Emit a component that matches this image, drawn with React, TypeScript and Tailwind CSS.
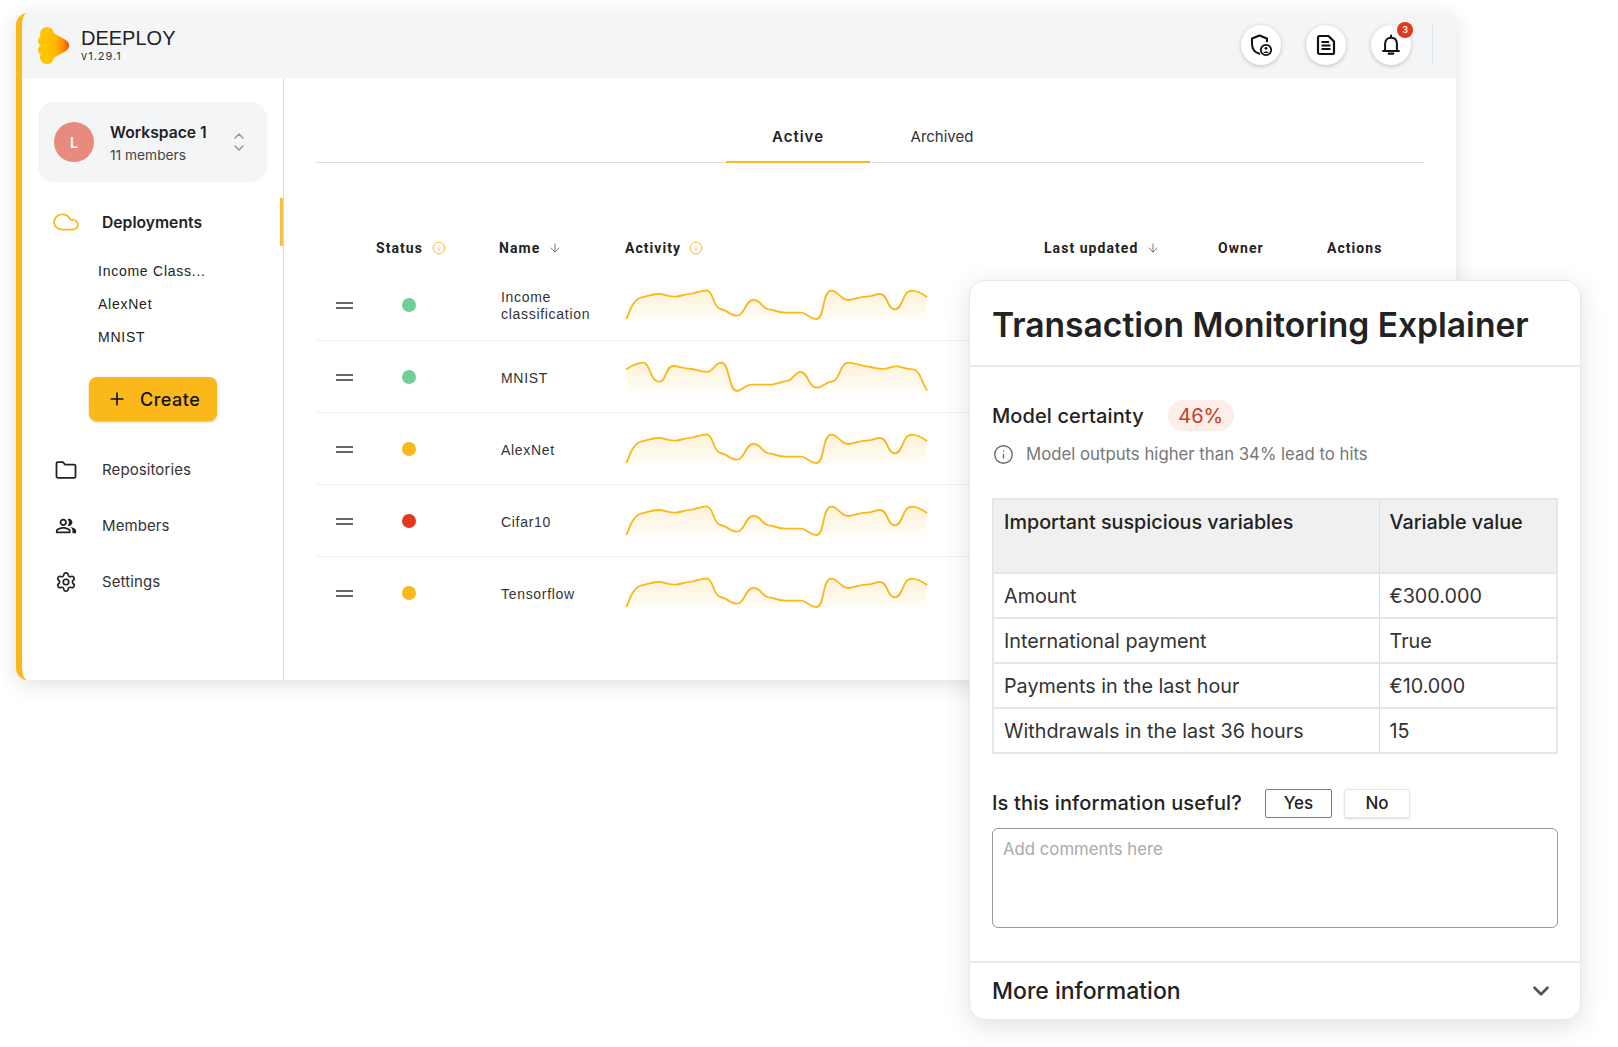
import { Cloud, Settings, Plus, ChevronUp, ChevronDown, ArrowDown, Info } from "lucide-react";
import { MdOutlinePeopleAlt } from "react-icons/md";

const PATH_A =
  "M20,115 C30,90 40,58 65,52 C80,50 95,42 115,42 C135,42 145,50 165,50 C180,50 190,43 215,41 C235,38 245,30 262,32 C280,35 280,80 300,87 C320,88 330,107 350,107 C375,107 375,60 400,60 C425,60 425,85 445,88 C465,90 475,97 495,98 L545,98 C560,100 570,117 590,117 C615,117 605,32 635,32 C655,32 660,60 685,60 C700,60 715,50 740,50 C755,50 765,42 780,42 C805,42 800,88 825,88 C850,88 845,33 875,32 C890,32 905,40 920,50";
const PATH_B =
  "M20,267 C35,258 50,248 70,248 C90,248 90,305 118,305 C140,305 135,258 160,258 C175,258 190,267 215,267 C235,270 245,277 265,275 C280,272 285,248 305,248 C330,250 325,333 350,333 C365,333 375,314 395,314 L455,314 C475,312 485,304 505,302 C520,298 525,276 542,276 C565,276 565,323 590,323 C610,323 615,305 640,303 C660,298 660,248 685,248 C705,248 720,258 745,260 C765,265 775,268 795,266 C810,263 820,258 835,259 C850,262 860,268 880,268 C900,272 905,305 920,330";

const rows = [
  { name: "Income classification", dot: "bg-[#6fcf97]", chart: "a" },
  { name: "MNIST", dot: "bg-[#6fcf97]", chart: "b" },
  { name: "AlexNet", dot: "bg-[#fbb81b]", chart: "a" },
  { name: "Cifar10", dot: "bg-[#e0391c]", chart: "a" },
  { name: "Tensorflow", dot: "bg-[#fbb81b]", chart: "a" },
];

const variables = [
  { label: "Amount", value: "€300.000" },
  { label: "International payment", value: "True" },
  { label: "Payments in the last hour", value: "€10.000" },
  { label: "Withdrawals in the last 36 hours", value: "15" },
];

const Sparkline = ({ chart, id }: { chart: string; id: string }) => {
  const d = chart === "a" ? PATH_A : PATH_B;
  const top = chart === "a" ? -33 : 183;
  const base = top + 165;
  return (
    <svg width="320" height="72" viewBox={`0 ${top} 960 216`} fill="none">
      <defs>
        <linearGradient id={id} x1="0" y1="0" x2="0" y2="1">
          <stop offset="0" stopColor="#fbb81b" stopOpacity="0.18" />
          <stop offset="1" stopColor="#fbb81b" stopOpacity="0" />
        </linearGradient>
      </defs>
      <path d={`${d} L920,${base} L20,${base} Z`} fill={`url(#${id})`} />
      <path d={d} stroke="#fbb81b" strokeWidth="5.5" strokeLinecap="round" />
    </svg>
  );
};

const Logo = () => (
  <svg width="33" height="37" viewBox="0 0 33 37" fill="none">
    <defs>
      <linearGradient id="logo-g" x1="0" y1="0" x2="1" y2="0">
        <stop offset="0" stopColor="#ffc400" />
        <stop offset="0.45" stopColor="#ffb400" />
        <stop offset="0.75" stopColor="#ff8a00" />
        <stop offset="1" stopColor="#ff4f00" />
      </linearGradient>
    </defs>
    <circle cx="10" cy="7" r="7" fill="#ffc400" />
    <circle cx="6" cy="14" r="5" fill="#ffc400" />
    <circle cx="6" cy="23" r="5" fill="#ffc400" />
    <circle cx="10" cy="30" r="7" fill="#ffc400" />
    <path d="M9 2 L28 12.5 C33.5 15.5 33.5 21.5 28 24.5 L9 35 Z" fill="url(#logo-g)" />
  </svg>
);

const ShieldUser = () => (
  <svg width="24" height="24" viewBox="0 0 24 24" fill="none" stroke="#111" strokeWidth="2">
    <path d="M11 21 C6 19.5 3 15.5 3 11 V5.5 L10.5 2.5 L18 5.5 V9" strokeLinejoin="round" />
    <circle cx="17" cy="17" r="5.2" strokeWidth="1.8" />
    <circle cx="17" cy="15.3" r="1.4" fill="#111" stroke="none" />
    <path d="M14.4 20 C14.8 18 19.2 18 19.6 20 Z" fill="#111" stroke="none" />
  </svg>
);

const DocIcon = () => (
  <svg width="22" height="22" viewBox="0 0 22 22" fill="none" stroke="#111" strokeWidth="2.2">
    <path d="M3 3.5 C3 2.7 3.7 2 4.5 2 H13.5 L19 7.5 V18.5 C19 19.3 18.3 20 17.5 20 H4.5 C3.7 20 3 19.3 3 18.5 Z" strokeLinejoin="round" />
    <path d="M6.5 8 H14 M6.5 11.5 H15.5 M6.5 15 H15.5" />
  </svg>
);

const BellIcon = () => (
  <svg width="20" height="22" viewBox="0 0 22 24" fill="none" stroke="#111" strokeWidth="2.2">
    <path d="M4.5 17.5 V11 C4.5 6.5 7 4 11 4 C15 4 17.5 6.5 17.5 11 V17.5" />
    <path d="M1.5 18.5 H20.5" />
    <path d="M11 1.5 V3" strokeLinecap="round" />
    <path d="M8.5 21.5 H13.5" strokeWidth="2.4" strokeLinecap="round" />
  </svg>
);

const FolderIcon = () => (
  <svg width="22" height="18" viewBox="0 0 22 18" fill="none" stroke="#222" strokeWidth="1.8">
    <path d="M1.5 2.5 C1.5 1.8 2 1.2 2.8 1.2 H8 L10 3.6 H19.2 C20 3.6 20.5 4.1 20.5 4.8 V15.6 C20.5 16.3 20 16.8 19.2 16.8 H2.8 C2 16.8 1.5 16.3 1.5 15.6 Z" strokeLinejoin="miter" />
  </svg>
);

const HeaderButton = ({ children }: { children: React.ReactNode }) => (
  <div className="relative w-10 h-10 rounded-full bg-white shadow-[0_1px_4px_rgba(0,0,0,0.22)] flex items-center justify-center">
    {children}
  </div>
);

const SideLink = ({ icon, label }: { icon: React.ReactNode; label: string }) => (
  <div className="flex items-center h-14 pl-[33px]">
    <div className="w-[22px] flex justify-center">{icon}</div>
    <span className="ml-[25px] text-[15px] tracking-[0.1px] text-[#333]">{label}</span>
  </div>
);

const HeaderInfo = () => <Info size={14} className="text-[#fbb81b]" strokeWidth={1.6} />;

export default function App() {
  return (
    <div className="relative w-[1618px] h-[1047px] bg-white overflow-hidden pt-[13px] pl-[16px] font-['Inter',sans-serif]">
      {/* main window */}
      <div className="w-[1440px] h-[667px] rounded-xl overflow-hidden bg-white border-l-[6px] border-[#fbb81b] shadow-[0_4px_20px_rgba(50,60,80,0.16)] flex flex-col">
        <header className="h-[65px] shrink-0 bg-[#f3f5f7] flex items-center">
          <div className="ml-[15px] -mt-[1px]">
            <Logo />
          </div>
          <div className="ml-[11px] -mt-[3px]">
            <div className="text-[20px] leading-[24px] text-[#222] font-['Liberation_Sans',sans-serif]">DEEPLOY</div>
            <div className="text-[11px] leading-[12px] tracking-[1px] text-[#333]">v1.29.1</div>
          </div>
          <div className="ml-auto flex items-center gap-[25px] mr-[4px] -mt-[2px]">
            <HeaderButton>
              <ShieldUser />
            </HeaderButton>
            <HeaderButton>
              <DocIcon />
            </HeaderButton>
            <HeaderButton>
              <BellIcon />
              <span className="absolute -top-[3px] right-[-2px] w-4 h-4 rounded-full bg-[#e0391c] text-white text-[9px] font-semibold flex items-center justify-center">
                3
              </span>
            </HeaderButton>
            <div className="w-px h-10 bg-[#dfe2e6] -ml-[4px] mr-[19px]" />
          </div>
        </header>

        <div className="flex flex-1 min-h-0">
          {/* sidebar */}
          <aside className="w-[262px] shrink-0 border-r border-[#dcdcdc] relative">
            <div className="mt-[24px] ml-[16px] w-[229px] h-[80px] rounded-2xl bg-[#f3f5f7] flex items-center pl-4">
              <div className="w-10 h-10 rounded-full bg-[#e98a7e] text-white text-[14px] font-semibold flex items-center justify-center">
                L
              </div>
              <div className="ml-4 w-[122px] mt-[2px]">
                <div className="text-[15.7px] leading-5 font-semibold text-[#222] pt-[1px]">Workspace 1</div>
                <div className="text-[13.75px] leading-5 mt-[2px] text-[#444]">11 members</div>
              </div>
              <div className="flex flex-col items-center -space-y-[4px] text-[#999] -ml-[1px]">
                <ChevronUp size={16} strokeWidth={2.4} />
                <ChevronDown size={16} strokeWidth={2.4} />
              </div>
            </div>

            <div className="relative flex items-center h-12 mt-4 pl-[34px]">
              <Cloud size={26} strokeWidth={1.5} className="text-[#fbb81b] w-[26px] -ml-[3px] scale-x-110" />
              <span className="ml-[23px] text-[15.7px] font-semibold text-[#222] mt-[2px]">Deployments</span>
              <div className="absolute right-0 top-0 w-[3px] h-12 bg-[#f3c03f]" />
            </div>

            <div className="pl-[76px] mt-[9px] text-[14px] tracking-[0.75px] text-[#222] font-['Liberation_Sans',sans-serif]">
              <div className="h-[33px] flex items-center">Income Class...</div>
              <div className="h-[33px] flex items-center">AlexNet</div>
              <div className="h-[33px] flex items-center">MNIST</div>
            </div>

            <button className="ml-[67px] mt-[23px] w-[128px] h-11 rounded-lg bg-[#fbb81b] shadow-[0_1px_2px_rgba(180,120,0,0.5)] flex items-center pl-[18px] text-[18px] font-medium tracking-[0.5px] text-[#111]">
              <Plus size={20} strokeWidth={2} />
              <span className="ml-[13px]">Create</span>
            </button>

            <div className="mt-[21px]">
              <SideLink icon={<FolderIcon />} label="Repositories" />
              <SideLink icon={<MdOutlinePeopleAlt size={22} className="text-[#222]" />} label="Members" />
              <SideLink icon={<Settings size={22} strokeWidth={1.8} className="text-[#222]" />} label="Settings" />
            </div>
          </aside>

          {/* deployments list */}
          <main className="flex-1 pl-[32px] pr-[32px]">
            <div className="mt-[31px] h-[54px] border-b border-[#dcdcdc] flex pl-[410px]">
              <div className="w-[144px] h-[54px] border-b-2 border-[#fbb81b] pt-[4px] flex items-center justify-center text-[15px] font-semibold tracking-[1px] text-[#222]">
                Active
              </div>
              <div className="w-[144px] h-[53px] pt-[3px] flex items-center justify-center text-[15px] text-[#333]">Archived</div>
            </div>

            <div className="mt-[67px] mb-[3px] h-[36px] grid grid-cols-[60px_123px_126px_419px_174px_109px_1fr] items-center text-[14px] font-bold tracking-[1.05px] text-[#222] font-['Roboto',sans-serif]">
              <div />
              <div className="flex items-center gap-[9px]">
                Status
                <HeaderInfo />
              </div>
              <div className="flex items-center gap-[8px]">
                Name
                <ArrowDown size={14} strokeWidth={1.5} className="text-[#666]" />
              </div>
              <div className="flex items-center gap-[8px]">
                Activity
                <HeaderInfo />
              </div>
              <div className="flex items-center gap-[8px]">
                Last updated
                <ArrowDown size={14} strokeWidth={1.5} className="text-[#666]" />
              </div>
              <div>Owner</div>
              <div>Actions</div>
            </div>

            {rows.map((row, i) => (
              <div
                key={row.name}
                className={`h-[72px] grid grid-cols-[60px_123px_126px_1fr] items-center ${i < 4 ? "border-b border-[#eeeeee]" : ""}`}
              >
                <div className="pl-[20px]">
                  <div className="w-[17px] h-[7px] border-y-2 border-[#666]" />
                </div>
                <div className="pl-[26px]">
                  <div className={`w-[14px] h-[14px] rounded-full ${row.dot}`} />
                </div>
                <div className="pl-[2px] pr-4 pt-[2px] text-[14px] leading-[17px] tracking-[0.7px] text-[#333] font-['Liberation_Sans',sans-serif]">{row.name}</div>
                <div className="-ml-[5px]">
                  <Sparkline chart={row.chart} id={`spark-${i}`} />
                </div>
              </div>
            ))}
          </main>
        </div>
      </div>

      {/* explainer card */}
      <section className="absolute left-[969px] top-[280px] w-[612px] h-[740px] rounded-2xl bg-white border border-[#e6e8eb] shadow-[0_6px_24px_rgba(50,60,80,0.16)] flex flex-col overflow-hidden">
        <div className="h-[86px] shrink-0 border-b-2 border-[#e9ebee] pl-[22px] flex items-center">
          <h1 className="text-[33.6px] font-semibold text-[#222] mt-[4px]">Transaction Monitoring Explainer</h1>
        </div>

        <div className="px-[22px] flex-1">
          <div className="mt-[33px] flex items-center">
            <span className="text-[20px] font-medium tracking-[0.1px] text-[#222]">Model certainty</span>
            <span className="ml-[24px] w-[66px] h-[31px] rounded-full bg-[#fdeeea] text-[#c8401f] text-[20px] flex items-center justify-center">
              46%
            </span>
          </div>
          <div className="mt-[11px] flex items-center text-[16.75px] text-[#777]">
            <Info size={21} strokeWidth={1.5} className="text-[#666] ml-[1px]" />
            <span className="ml-[12px]">Model outputs higher than 34% lead to hits</span>
          </div>

          <table className="mt-[31px] w-[566px] border-collapse border-2 border-[#e6e6e6] text-[19.75px] text-[#333] table-fixed">
            <thead>
              <tr className="h-[74px] bg-[#f0f0f0] text-left align-top">
                <th className="w-[386px] pl-[10px] pt-[8px] font-medium text-[#222] border-r border-[#dcdcdc]">
                  Important suspicious variables
                </th>
                <th className="pl-[10px] pt-[8px] font-medium text-[#222]">Variable value</th>
              </tr>
            </thead>
            <tbody>
              {variables.map((v) => (
                <tr key={v.label} className="h-[45px] border-t-2 border-[#e6e6e6]">
                  <td className="pl-[10px] pt-[2px] border-r border-[#dcdcdc]">{v.label}</td>
                  <td className="pl-[10px] pt-[2px]">{v.value}</td>
                </tr>
              ))}
            </tbody>
          </table>

          <div className="mt-[34px] flex items-center h-[30px]">
            <span className="text-[20px] font-medium tracking-[0.15px] text-[#222]">Is this information useful?</span>
            <button className="ml-[23px] w-[67px] h-[29px] rounded-[2px] border border-[#4f86ad] pt-[1px] text-[17px] font-medium text-[#222]">
              Yes
            </button>
            <button className="ml-[12px] w-[66px] h-[29px] rounded-[2px] border border-[#e6e6e6] shadow-[0_1px_2px_rgba(0,0,0,0.15)] pt-[1px] text-[17px] font-medium text-[#222]">
              No
            </button>
          </div>

          <textarea
            placeholder="Add comments here"
            className="mt-[10px] block w-[566px] h-[100px] rounded-md border border-[#9a9a9a] px-[10px] py-[8px] text-[16.75px] placeholder:text-[#aaaaaa] resize-none"
          />
        </div>

        <div className="h-[58px] shrink-0 border-t-2 border-[#e9ebee] pl-[22px] pr-[26px] flex items-center justify-between">
          <span className="text-[23px] font-medium text-[#222]">More information</span>
          <ChevronDown size={26} strokeWidth={2.5} className="text-[#555]" />
        </div>
      </section>
    </div>
  );
}
